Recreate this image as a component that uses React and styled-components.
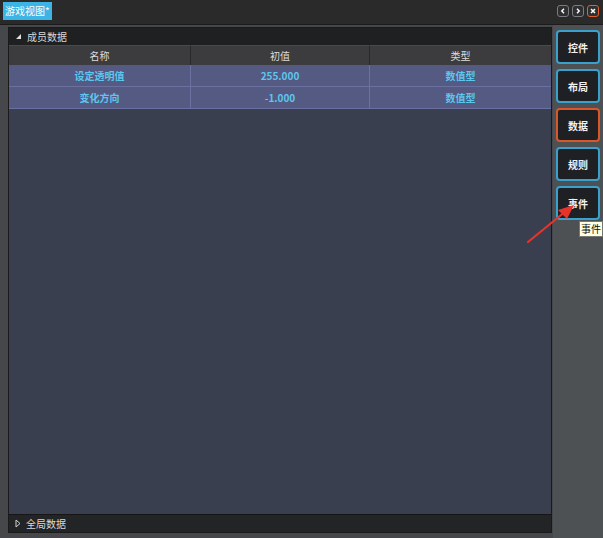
import React from 'react'
import styled, { createGlobalStyle } from 'styled-components'

const GlobalStyle = createGlobalStyle`
  html, body { margin: 0; padding: 0; background: #46484b; }
  body { font-family: "Noto Sans CJK SC", "Noto Sans", "Liberation Sans", sans-serif; }
`

const Window = styled.div`
  width: 603px;
  height: 538px;
  display: flex;
  flex-direction: column;
  background: #45474a;
  position: relative;
  overflow: hidden;
`

const TitleBar = styled.div`
  height: 24px;
  flex: none;
  background: #2a2a2b;
  border-bottom: 1px solid #1c1c1d;
  display: flex;
  align-items: center;
  justify-content: space-between;
  padding: 0 4px 0 3px;
`

const Tab = styled.div`
  height: 18px;
  padding: 0 2px;
  background: #3cb4e6;
  color: #fff;
  font-size: 10px;
  line-height: 18px;
  margin-top: -2px;
`

const Controls = styled.div`
  display: flex;
  gap: 3px;
  margin-top: -2px;
`

const CtrlButton = styled.div`
  width: 10px;
  height: 10px;
  border: 1px solid ${p => (p.close ? '#e2602a' : '#7a7c80')};
  border-radius: 3px;
  background: #2e2f31;
  display: flex;
  align-items: center;
  justify-content: center;
`

const Body = styled.div`
  flex: 1;
  display: flex;
  min-height: 0;
`

const Panel = styled.div`
  flex: 1;
  margin: 2px 1px 5px 8px;
  border: 1px solid #1a1a1b;
  display: flex;
  flex-direction: column;
  background: #3a3f4f;
`

const SectionBar = styled.div`
  height: 17px;
  flex: none;
  background: ${p => (p.bottom ? '#232426' : '#1f2022')};
  color: #d8d8d8;
  font-size: 10px;
  display: flex;
  align-items: center;
  gap: 5px;
  padding-left: 6px;
  border-top: ${p => (p.bottom ? '1px solid #161617' : 'none')};
`

const Table = styled.div`
  display: grid;
  grid-template-columns: 181px 179px 1fr;
  flex: none;
`

const HeadCell = styled.div`
  height: 19px;
  background: #3c3c3e;
  color: #dcdcdc;
  font-size: 10px;
  display: flex;
  align-items: center;
  justify-content: center;
  border-left: ${p => (p.first ? 'none' : '1px solid #2a2a2c')};
  border-top: 1px solid #4a4a4c;
`

const Cell = styled.div`
  height: 21px;
  background: #545a82;
  color: #5cc6ee;
  font-size: 10px;
  font-weight: bold;
  display: flex;
  align-items: center;
  justify-content: center;
  border-left: ${p => (p.first ? 'none' : '1px solid #6c72a0')};
  border-bottom: 1px solid #6a70a0;
`

const Filler = styled.div`
  flex: 1;
`

const Sidebar = styled.div`
  width: 50px;
  flex: none;
  background: #4e5154;
  display: flex;
  flex-direction: column;
  align-items: center;
  gap: 5px;
  padding-top: 5px;
  position: relative;
`

const SideButton = styled.div`
  width: 40px;
  height: 30px;
  background: #1f2024;
  border: 2px solid ${p => (p.active ? '#d9582a' : '#3aa0cc')};
  border-radius: 4px;
  color: #f2f2f2;
  font-size: 10px;
  font-weight: bold;
  display: flex;
  align-items: center;
  justify-content: center;
`

const Tooltip = styled.div`
  position: absolute;
  left: 26px;
  top: 196px;
  background: #ffffe1;
  color: #111;
  border: 1px solid #777;
  font-size: 10px;
  padding: 0 1px;
  line-height: 14px;
  white-space: nowrap;
`

const Arrow = styled.svg`
  position: absolute;
  left: 520px;
  top: 198px;
  pointer-events: none;
`

const rows = [
  ['设定透明值', '255.000', '数值型'],
  ['变化方向', '-1.000', '数值型'],
]

const buttons = ['控件', '布局', '数据', '规则', '事件']

export default function App() {
  return (
    <>
      <GlobalStyle />
      <Window>
        <TitleBar>
          <Tab>游戏视图*</Tab>
          <Controls>
            <CtrlButton>
              <svg width="6" height="6" viewBox="0 0 6 6"><path d="M4 0.8L1.8 3L4 5.2" stroke="#fff" strokeWidth="1.4" fill="none" /></svg>
            </CtrlButton>
            <CtrlButton>
              <svg width="6" height="6" viewBox="0 0 6 6"><path d="M2 0.8L4.2 3L2 5.2" stroke="#fff" strokeWidth="1.4" fill="none" /></svg>
            </CtrlButton>
            <CtrlButton close>
              <svg width="6" height="6" viewBox="0 0 6 6"><path d="M1 1L5 5M5 1L1 5" stroke="#fff" strokeWidth="1.5" /></svg>
            </CtrlButton>
          </Controls>
        </TitleBar>
        <Body>
          <Panel>
            <SectionBar>
              <svg width="7" height="7" viewBox="0 0 7 7"><path d="M6 1L6 6L1 6Z" fill="#e0e0e0" /></svg>
              成员数据
            </SectionBar>
            <Table>
              <HeadCell first>名称</HeadCell>
              <HeadCell>初值</HeadCell>
              <HeadCell>类型</HeadCell>
              {rows.map(r => (
                <React.Fragment key={r[0]}>
                  <Cell first>{r[0]}</Cell>
                  <Cell>{r[1]}</Cell>
                  <Cell>{r[2]}</Cell>
                </React.Fragment>
              ))}
            </Table>
            <Filler />
            <SectionBar bottom>
              <svg width="6" height="9" viewBox="0 0 6 9"><path d="M1 1L5 4.5L1 8Z" fill="none" stroke="#d0d0d0" strokeWidth="1" /></svg>
              全局数据
            </SectionBar>
          </Panel>
          <Sidebar>
            {buttons.map(b => (
              <SideButton key={b} active={b === '数据'}>{b}</SideButton>
            ))}
            <Tooltip>事件</Tooltip>
          </Sidebar>
        </Body>
        <Arrow width="60" height="50" viewBox="0 0 60 50">
          <path d="M8 44L46 13" stroke="#e8332b" strokeWidth="2.2" strokeLinecap="round" />
          <path d="M54 7L38 12L47 21Z" fill="#e8332b" />
        </Arrow>
      </Window>
    </>
  )
}
